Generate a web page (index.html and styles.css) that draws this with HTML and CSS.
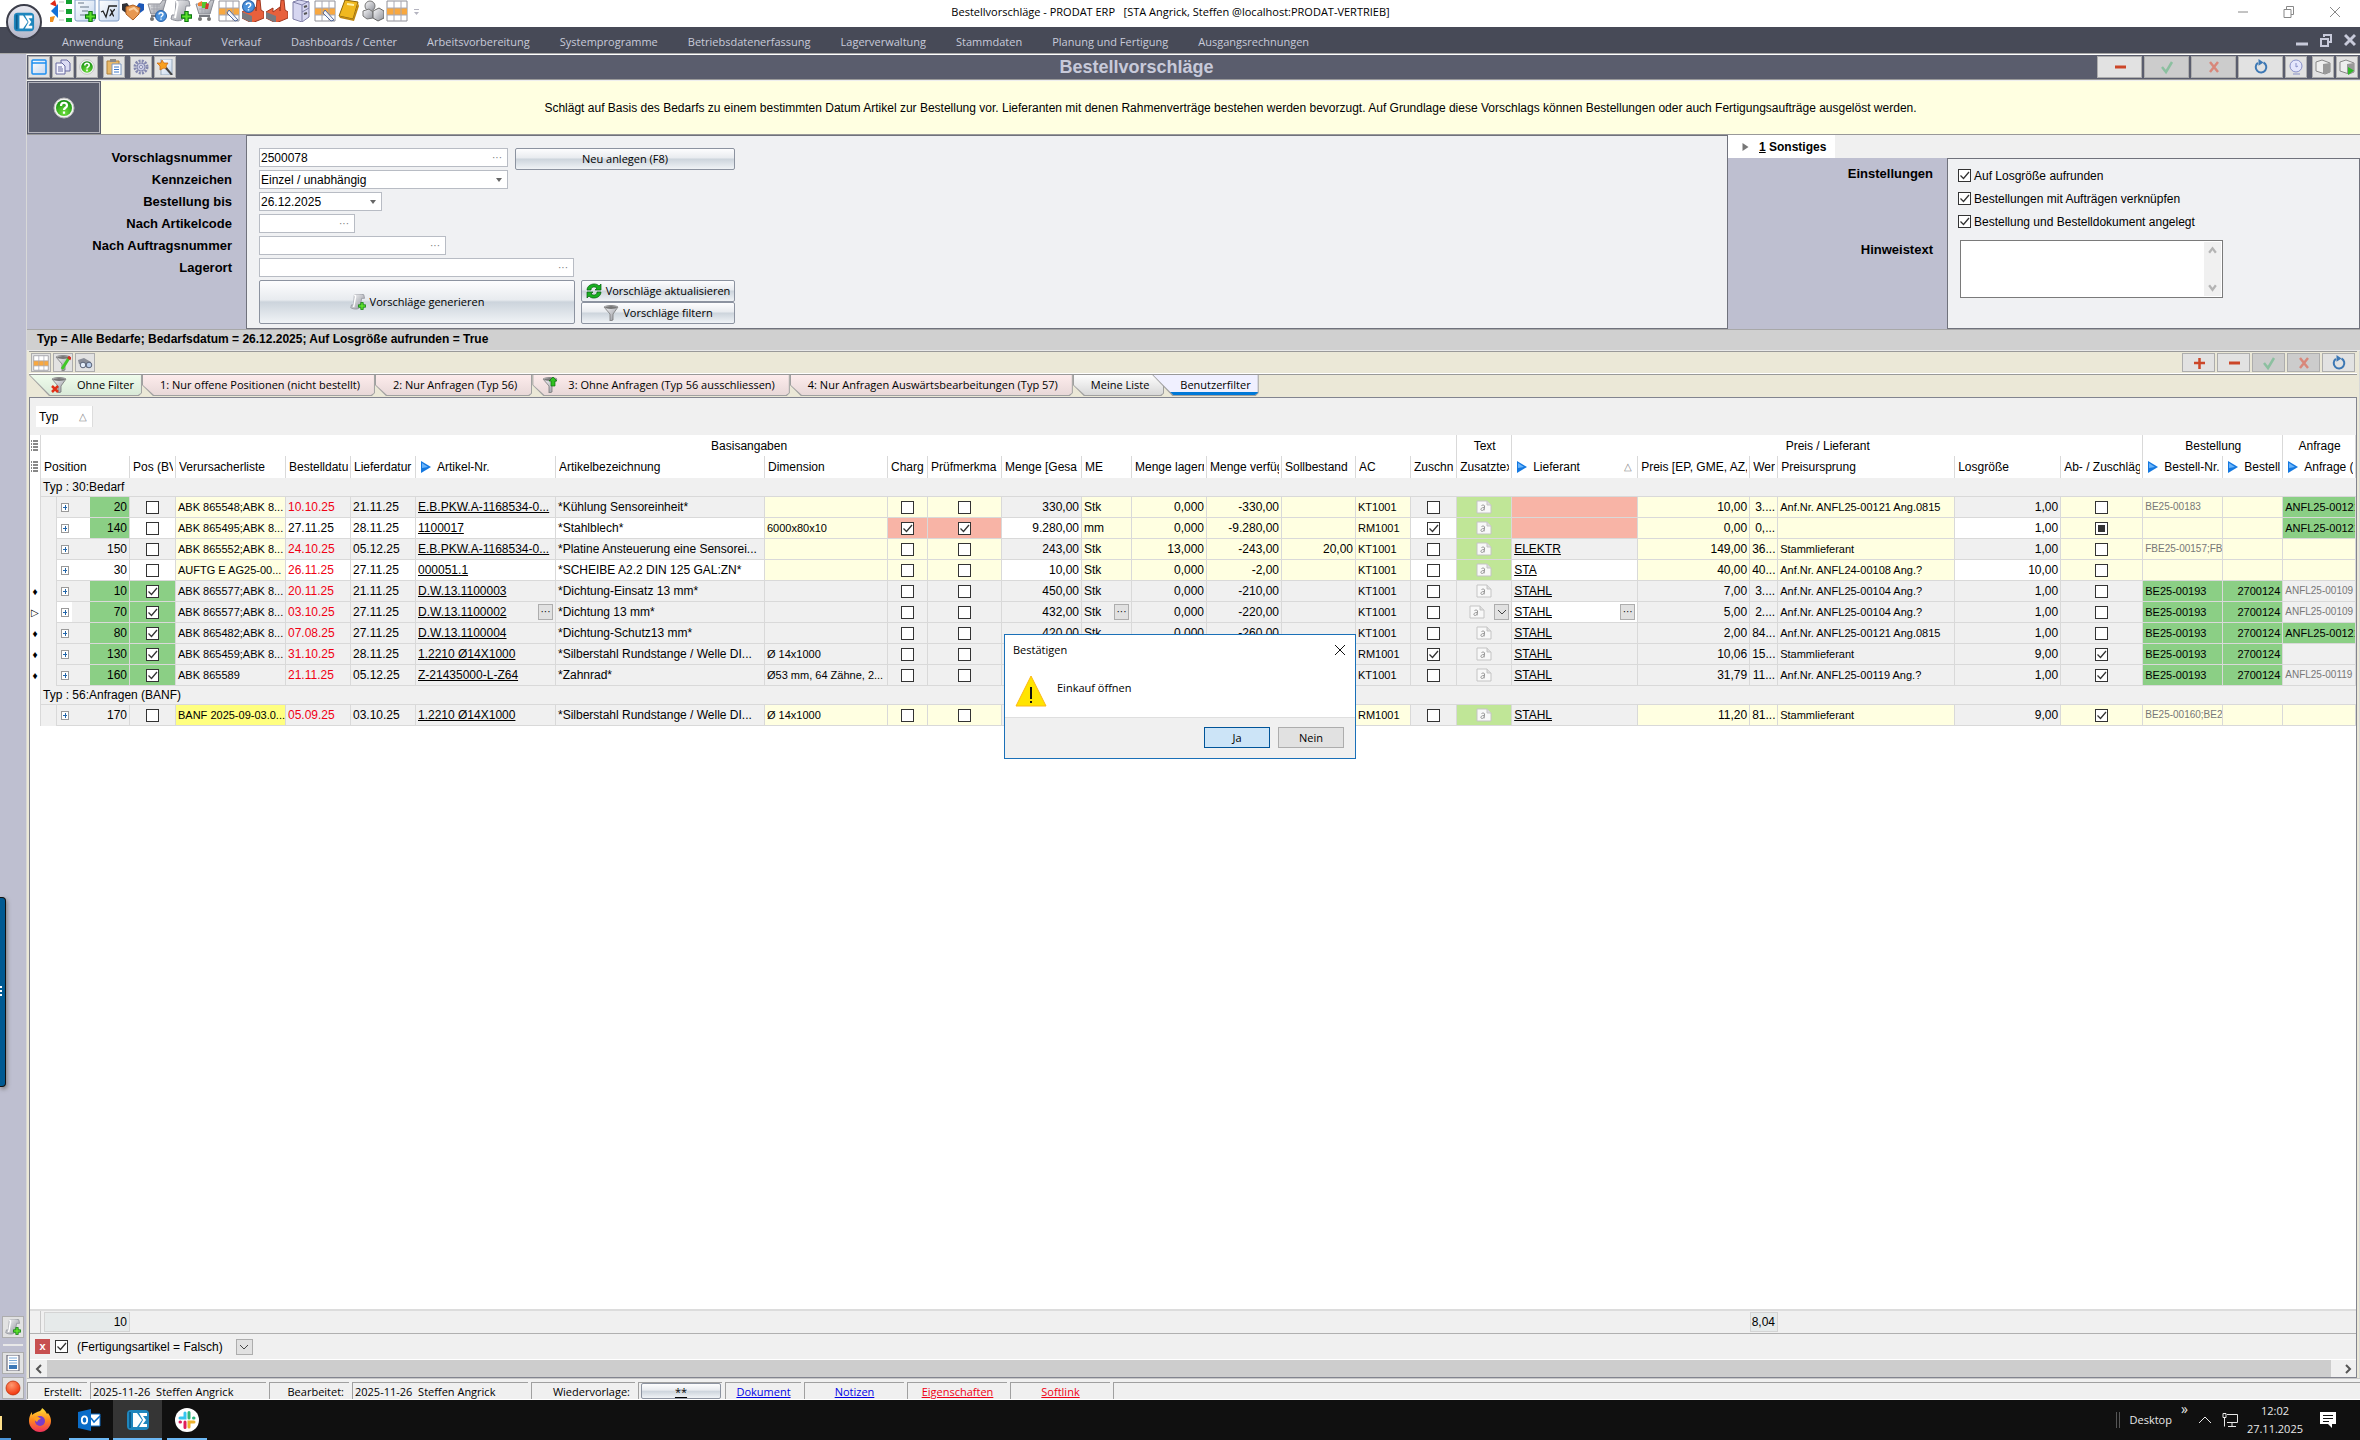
FILE: index.html
```html
<!DOCTYPE html>
<html lang="de">
<head>
  <meta charset="UTF-8">
  <meta name="viewport" content="width=device-width, initial-scale=1.0">
  <title>Bestellvorschläge - PRODAT ERP</title>
  <link rel="stylesheet" href="styles.css">
</head>
<body>
  <!-- Icon definitions -->
  <svg class="defs" width="0" height="0" aria-hidden="true">
    <defs>
      <linearGradient id="gMetal" x1="0" y1="0" x2="1" y2="1"><stop offset="0" stop-color="#fafafc"/><stop offset="1" stop-color="#8d9098"/></linearGradient>
      <linearGradient id="gPaper" x1="0" y1="0" x2="1" y2="1"><stop offset="0" stop-color="#fff"/><stop offset="1" stop-color="#c4d6ee"/></linearGradient>
      <linearGradient id="gFox" x1="0" y1="0" x2="0" y2="1"><stop offset="0" stop-color="#ffe03a"/><stop offset=".5" stop-color="#ff8a1c"/><stop offset="1" stop-color="#f0305c"/></linearGradient>
      <radialGradient id="gGreen" cx=".5" cy=".8" r=".8"><stop offset="0" stop-color="#6fe03c"/><stop offset="1" stop-color="#128a10"/></radialGradient>
      <radialGradient id="gRed" cx=".4" cy=".3" r=".8"><stop offset="0" stop-color="#ff9a70"/><stop offset="1" stop-color="#f02800"/></radialGradient>
    </defs>
    <symbol id="plus" viewBox="0 0 10 10"><path d="M3.5 .5h3v3h3v3h-3v3h-3v-3h-3v-3h3z" fill="#5be02c" stroke="#0c7a10"/></symbol>
    <symbol id="ask" viewBox="0 0 12 12"><circle cx="6" cy="6" r="5.5" fill="#4b92dc" stroke="#2a62a8"/><path d="M4 4.6c0-2.4 4-2.4 4 0 0 1.400-2 1.400-2 2.800M6 8.600v1.200" fill="none" stroke="#fff" stroke-width="1.400"/></symbol>
    <symbol id="org" viewBox="0 0 22 22"><path d="M0 4l5-4 2 7z" fill="#e02818"/><path d="M1 11l7-7v14z" fill="#1470d8"/><path d="M0 17l5-1-2 6H0z" fill="#f09020"/><path d="M9 2h5M9 11h5M9 20h5" stroke="#bbb"/><path d="M16 0h6v4h-6zM16 9h6v5h-6zM16 18h6v4h-6z" fill="#12a030"/></symbol>
    <symbol id="doc" viewBox="0 0 22 22"><path d="M1 0v19q0 2 2 2h16q2 0 2-2V0z" fill="url(#gPaper)" stroke="#7f9cc6"/><path d="M4 3h6M6 7h9M8 11h6M6 15h5" stroke="#678"/><use href="#plus" x="11" y="11" width="11" height="11"/></symbol>
    <symbol id="root" viewBox="0 0 22 22"><path d="M1 0v19q0 2 2 2h16q2 0 2-2V0z" fill="url(#gPaper)" stroke="#7f9cc6"/><path d="M3 12l2-1 3 6 3-11h8M12 10c2-1 2 6 4 6M17 9.500c-2 0-4 6-5.500 6.500" fill="none" stroke="#222" stroke-width="1.300"/></symbol>
    <symbol id="hands" viewBox="0 0 22 22"><path d="M0 4l5-1 3 4-4 6-4-3z" fill="#303238"/><path d="M22 4l-5-1-3 4 4 6 4-3z" fill="#1c58b8"/><path d="M4 7l7-2 7 3-1 6-6 6-7-6z" fill="#e89850" stroke="#b06020"/><path d="M7 10l5-2 4 4" fill="none" stroke="#fbd0a0" stroke-width="2"/></symbol>
    <symbol id="cart" viewBox="0 0 22 22"><path d="M2 4h12l3-4h3l-4 14H5z" fill="url(#gMetal)" stroke="#888a92"/><path d="M5 6h9M5 9h9M8 4v9M11 4v9" stroke="#a6a8b0"/><path d="M5 16h11" stroke="#77797f" stroke-width="2"/><circle cx="6" cy="19" r="2" fill="#777"/><circle cx="15" cy="19" r="2" fill="#777"/></symbol>
    <symbol id="cartask" viewBox="0 0 22 22"><use href="#cart"/><use href="#ask" x="9" y="10" width="12" height="12"/></symbol>
    <symbol id="cartfull" viewBox="0 0 22 22"><use href="#cart"/><path d="M4 3l4-2 1 5H4z" fill="#f08030"/><path d="M8 2h5v6H8z" fill="#52c832"/><path d="M12 3l3 1-1 5h-3z" fill="#d8362c"/></symbol>
    <symbol id="scroll" viewBox="0 0 22 22"><path d="M6 1c3-2 10-1 13 0l1 5h-4l-2 12c-3 4-9 3-13 1l1-4h3z" fill="url(#gMetal)" stroke="#8c8f98"/><path d="M6 1c2 1 2 3 1 6L5 18" fill="none" stroke="#fff" stroke-width="2"/><use href="#plus" x="11" y="11" width="11" height="11"/></symbol>
    <symbol id="grid" viewBox="0 0 22 22"><path d="M1 1h20v20H1z" fill="#fff" stroke="#909098"/><path d="M1 8h20v7H1z" fill="#f8a840"/><path d="M1 8h20M1 15h20M8 1v20M15 1v20" stroke="#a8a8b4"/></symbol>
    <symbol id="gridpen" viewBox="0 0 22 22"><use href="#grid"/><path d="M11 10l9 10-3 1-8-8z" fill="#f2f4fa" stroke="#556a9a"/></symbol>
    <symbol id="factory" viewBox="0 0 22 22"><path d="M0 12l7-4v4l7-5v4l1-11h3l1 10 3 2v6l-12 5-10-5z" fill="#e8603c" stroke="#a03820"/><path d="M0 12l10 4v7L0 18z" fill="#777a80"/></symbol>
    <symbol id="factoryask" viewBox="0 0 22 22"><use href="#factory"/><use href="#ask" x="0" y="0" width="13" height="13"/></symbol>
    <symbol id="cabinet" viewBox="0 0 22 22"><path d="M3 2l6-2 10 2v15l-7 5-9-3z" fill="#d6d6f0" stroke="#8080a8"/><path d="M3 2l9 3v17M12 5l7-4M12 12l7-4" fill="none" stroke="#8080a8"/><path d="M14 7l3-1M14 14l3-1" stroke="#555" stroke-width="2"/></symbol>
    <symbol id="book" viewBox="0 0 22 22"><path d="M7 0l13 2-5 17-14-3z" fill="#f0b820" stroke="#8c6408"/><path d="M9 4l7 1" stroke="#fff2a8" stroke-width="2"/><path d="M1 16l14 3 5-16 1 3-5 15-14-3z" fill="#c08810"/></symbol>
    <symbol id="bricks" viewBox="0 0 22 22"><circle cx="8" cy="6" r="5" fill="url(#gMetal)" stroke="#777"/><path d="M1 11l6-2 4 3v6l-6 1-4-3z" fill="url(#gMetal)" stroke="#777"/><path d="M11 11l6-3 5 3v7l-6 3-5-3z" fill="url(#gMetal)" stroke="#666"/></symbol>
    <symbol id="logo" viewBox="0 0 24 24"><rect x="1" y="2" width="22" height="20" rx="4" fill="#1f86bd"/><path d="M5 4H3v16h2z" fill="#0c5c8c"/><path d="M7 5h4l5 7-5 7H7z" fill="#fff"/><path d="M13 5h8v3h-4l3 4-3 4h4v3h-8l4-7z" fill="#fff"/></symbol>
    <symbol id="help" viewBox="0 0 22 22"><circle cx="11" cy="11" r="10" fill="#f4f4f4" stroke="#b8b8b8"/><circle cx="11" cy="11" r="8" fill="url(#gGreen)"/><path d="M8 9c0-4.500 6-4 6-.5 0 2.500-3 2-3 4.500M11 14.500v2.300" fill="none" stroke="#fff" stroke-width="2.200"/></symbol>
    <symbol id="window" viewBox="0 0 16 16"><rect x="1" y="1" width="14" height="14" rx="1" fill="url(#gPaper)" stroke="#1c8ff0" stroke-width="1.500"/><path d="M1 4h14" stroke="#1c8ff0" stroke-width="1.500"/></symbol>
    <symbol id="copy" viewBox="0 0 16 16"><path d="M6 1h6l3 3v8H6z" fill="#dcdcf4" stroke="#6668a0"/><path d="M1 4h6l3 3v8H1z" fill="#f4f4fe" stroke="#6668a0"/><path d="M3 8h4M3 10h5M3 12h5" stroke="#6668a0"/></symbol>
    <symbol id="paste" viewBox="0 0 16 16"><path d="M1 2h12v13H1z" fill="#e8b868" stroke="#b08038"/><path d="M4 0h6v3H4z" fill="#888"/><path d="M6 5h9v11H6z" fill="#fff" stroke="#7a96c0"/><path d="M8 8h5M8 10.500h5M8 13h5" stroke="#3c78c8"/></symbol>
    <symbol id="gear" viewBox="0 0 16 16"><circle cx="8" cy="8" r="6" fill="none" stroke="#8488b0" stroke-width="3" stroke-dasharray="2 1.140"/><circle cx="8" cy="8" r="4" fill="#c8cae4" stroke="#8488b0"/><circle cx="8" cy="8" r="1.500" fill="#fff" stroke="#8488b0"/></symbol>
    <symbol id="wand" viewBox="0 0 16 16"><path d="M4 0h11v16H4z" fill="url(#gPaper)" stroke="#9ab"/><path d="M5 1l2 3 4 0-2 3 2 4-4-2-4 2 0-4-3-3h4z" fill="#f8a020" stroke="#c86008" stroke-width=".7"/><path d="M9 9l6 7" stroke="#444" stroke-width="2"/></symbol>
    <symbol id="funnel" viewBox="0 0 16 16"><path d="M1 2c3-2 11-2 14 0l-5 7v6l-3 1V9z" fill="url(#gMetal)" stroke="#777" stroke-width=".8"/><ellipse cx="8" cy="2.500" rx="6" ry="1.500" fill="#777"/></symbol>
    <symbol id="funnelx" viewBox="0 0 16 16"><use href="#funnel"/><path d="M1 9l6 6M7 9l-6 6" stroke="#e03018" stroke-width="2.500"/></symbol>
    <symbol id="funnelup" viewBox="0 0 16 16"><use href="#funnel"/><path d="M11 0l4 4h-2v5H9V4H7z" fill="#30c020" stroke="#107010" stroke-width=".7"/></symbol>
    <symbol id="funnelpen" viewBox="0 0 16 16"><use href="#funnel"/><path d="M14 3L7 14" stroke="#40c828" stroke-width="3"/><path d="M13 2l3 2" stroke="#d03020" stroke-width="3"/></symbol>
    <symbol id="binoc" viewBox="0 0 16 16"><path d="M1 5l6-2 7 4v5l-4 1-4-3-4-1z" fill="#8a8e98"/><circle cx="6" cy="10" r="2.800" fill="#e4eefa" stroke="#5a6478"/><circle cx="12" cy="10" r="2.800" fill="#b8cce8" stroke="#5a6478"/></symbol>
    <symbol id="refresh" viewBox="0 0 16 16"><path d="M10.500 3.500a5.300 5.300 0 1 1-5.600.4" fill="none" stroke="#3d78b4" stroke-width="2"/><path d="M5.500 0l5 3.500-5 3.200z" fill="#3d78b4"/></symbol>
    <symbol id="cycle" viewBox="0 0 16 16"><path d="M1 7c0-6 9-8 12-4l2-2v6H9l2-2C8 3 5 4 5 7z" fill="#18b020" stroke="#075c10" stroke-width=".7"/><path d="M15 9c0 6-9 8-12 4l-2 2V9h6l-2 2c3 2 6 1 6-2z" fill="#18b020" stroke="#075c10" stroke-width=".7"/></symbol>
    <symbol id="check" viewBox="0 0 16 16"><path d="M3 8l4 5 6-10" fill="none" stroke="#8cc0a0" stroke-width="2.500"/></symbol>
    <symbol id="cross" viewBox="0 0 16 16"><path d="M4 3l8 10M12 3L4 13" fill="none" stroke="#d8877a" stroke-width="2.500"/></symbol>
    <symbol id="minus" viewBox="0 0 16 16"><path d="M3 8h11" stroke="#cc4628" stroke-width="3"/></symbol>
    <symbol id="add" viewBox="0 0 16 16"><path d="M3 8h11M8.500 3v11" stroke="#cc4628" stroke-width="2.500"/></symbol>
    <symbol id="clock" viewBox="0 0 16 16"><circle cx="8" cy="7" r="6" fill="#e4e6fc" stroke="#8890c8"/><path d="M8 4v4l2-1M5 15h7" fill="none" stroke="#8890c8"/></symbol>
    <symbol id="box" viewBox="0 0 16 16"><path d="M1 3l6-2 8 3v9l-5 2-9-3z" fill="#eee" stroke="#888"/><path d="M8 5l7-1v9l-5 2-2-1z" fill="#999"/></symbol>
    <symbol id="boxgo" viewBox="0 0 16 16"><use href="#box"/><path d="M9 8l6 3.500L9 16z" fill="#30b828"/></symbol>
    <symbol id="link" viewBox="0 0 10 12"><path d="M0 0l10 6-10 6z" fill="#1478e0"/><path d="M1 2l6 4-6 1z" fill="#6ab4fa"/></symbol>
    <symbol id="note" viewBox="0 0 16 14"><path d="M1 1h10l4 4v8H1z" fill="#f8f8f8" stroke="#c4c4c4"/><path d="M11 1v4h4" fill="#ddd" stroke="#c4c4c4"/><path d="M5.500 5.500c2-1 3.500-.5 3 1.500L8 10.500M8.500 7.500c-4-.5-4.500 3-2.500 3 1 0 2-1 2.200-2" fill="none" stroke="#999"/></symbol>
    <symbol id="page" viewBox="0 0 16 16"><path d="M2 0h12v16H2z" fill="#fff" stroke="#556"/><path d="M4 3h8M4 5.500h8M4 8h8" stroke="#78a8d8"/><path d="M4 10h8v4H4z" fill="#3c78b8"/></symbol>
    <symbol id="dot" viewBox="0 0 16 16"><circle cx="8" cy="8" r="7" fill="url(#gRed)" stroke="#b82800" stroke-width=".7"/></symbol>
    <symbol id="lines" viewBox="0 0 7 12"><path d="M2 1h5M2 4h5M2 7h5M2 10h5M0 1h1M0 4h1M0 7h1M0 10h1" stroke="#111"/></symbol>
    <symbol id="firefox" viewBox="0 0 24 24"><path d="M12 3c1-1 2-2 2-3 3 2 4 4 5 6l1-1c2 3 3 5 3 8 0 6-5 11-11 11S1 19 1 13c0-4 1-6 3-9v3c2-2 5-3 8-4z" fill="url(#gFox)"/><circle cx="12" cy="13" r="5" fill="#7a3cc8"/><path d="M6 9c3-1 5 0 7 2-2 0-3 1-4 3-2-1-3-3-3-5z" fill="#ffa020"/></symbol>
    <symbol id="outlook" viewBox="0 0 24 24"><path d="M13 6h10v12H13z" fill="#fff" stroke="#0a6cc8"/><path d="M14 10l3 4 6-6" fill="none" stroke="#0a6cc8" stroke-width="1.500"/><path d="M1 4l13-3v22L1 20z" fill="#0a6cc8"/><ellipse cx="7.500" cy="12" rx="2.700" ry="3.600" fill="none" stroke="#fff" stroke-width="1.800"/></symbol>
    <symbol id="slack" viewBox="0 0 24 24"><circle cx="12" cy="12" r="12" fill="#fff"/><g fill="none" stroke-width="3" stroke-linecap="round"><path d="M10 5v5H5" stroke="#36c5f0"/><path d="M14 4.500V10M19 10h-.5" stroke="#2eb67d"/><path d="M14 19v-5h5" stroke="#ecb22e"/><path d="M10 14v5.500M5 14h.5" stroke="#e01e5a"/></g></symbol>
  </svg>

  <!-- Window title bar -->
  <header class="titlebar">
    <div class="quick-icons">
      <svg><use href="#org"/></svg><svg><use href="#doc"/></svg><svg><use href="#root"/></svg><svg><use href="#hands"/></svg><svg><use href="#cartask"/></svg><svg><use href="#scroll"/></svg><svg><use href="#cartfull"/></svg><svg><use href="#gridpen"/></svg><svg><use href="#factoryask"/></svg><svg><use href="#factory"/></svg><svg><use href="#cabinet"/></svg><svg><use href="#gridpen"/></svg><svg><use href="#book"/></svg><svg><use href="#bricks"/></svg><svg><use href="#grid"/></svg>
      <svg viewBox="0 0 22 22"><path d="M4 9.500h5" stroke="#b4b4c0"/><path d="M4 12h5l-2.500 3z" fill="#b4b4c0"/></svg>
    </div>
    <h1 class="window-title">Bestellvorschläge - PRODAT ERP &nbsp; [STA Angrick, Steffen @localhost:PRODAT-VERTRIEB]</h1>
    <div class="window-buttons">
      <button aria-label="Minimieren"><svg viewBox="0 0 12 12"><path d="M1 6h10"/></svg></button>
      <button aria-label="Wiederherstellen"><svg viewBox="0 0 12 12"><path d="M1 3.500h7v8H1zM3.500 3.500v-3h7v8H8"/></svg></button>
      <button aria-label="Schließen"><svg viewBox="0 0 12 12"><path d="M1 1l10 10M11 1L1 11"/></svg></button>
    </div>
  </header>
  <button class="app-button" aria-label="Anwendungsmenü"><svg><use href="#logo"/></svg></button>

  <nav class="menubar">
    <a href="#">Anwendung</a>
    <a href="#">Einkauf</a>
    <a href="#">Verkauf</a>
    <a href="#">Dashboards / Center</a>
    <a href="#">Arbeitsvorbereitung</a>
    <a href="#">Systemprogramme</a>
    <a href="#">Betriebsdatenerfassung</a>
    <a href="#">Lagerverwaltung</a>
    <a href="#">Stammdaten</a>
    <a href="#">Planung und Fertigung</a>
    <a href="#">Ausgangsrechnungen</a>
    <div class="mdi-buttons">
      <svg viewBox="0 0 12 14"><path d="M0 11h12" stroke-width="3"/></svg>
      <svg viewBox="0 0 12 14"><path d="M1 6h7v7H1zM4 4V2h7v7H9" stroke-width="2"/></svg>
      <svg viewBox="0 0 12 14"><path d="M1 2l10 10M11 2L1 12" stroke-width="3"/></svg>
    </div>
  </nav>

  <div class="desktop">
    <aside class="rail">
      <button class="rail-tab" aria-label="Leiste einblenden"><svg viewBox="0 0 4 12"><path d="M0 1h2M0 5h2M0 9h2" stroke="#fff" stroke-width="2"/></svg></button>
      <button class="tool" aria-label="Neu"><svg><use href="#scroll"/></svg></button>
      <hr>
      <button class="tool" aria-label="Liste"><svg><use href="#page"/></svg></button>
      <button class="tool" aria-label="Aufnahme"><svg><use href="#dot"/></svg></button>
    </aside>

    <main class="workspace">
      <div class="form-toolbar">
        <button class="tool" aria-label="Fenster"><svg><use href="#window"/></svg></button>
        <button class="tool" aria-label="Kopieren"><svg><use href="#copy"/></svg></button>
        <button class="tool gap" aria-label="Hilfe"><svg><use href="#help"/></svg></button>
        <button class="tool gap" aria-label="Einfügen"><svg><use href="#paste"/></svg></button>
        <button class="tool" aria-label="Einstellungen"><svg><use href="#gear"/></svg></button>
        <button class="tool" aria-label="Assistent"><svg><use href="#wand"/></svg></button>
        <h2>Bestellvorschläge</h2>
        <button class="tool wide" aria-label="Löschen"><svg><use href="#minus"/></svg></button>
        <button class="tool wide off" aria-label="Speichern"><svg><use href="#check"/></svg></button>
        <button class="tool wide off" aria-label="Abbrechen"><svg><use href="#cross"/></svg></button>
        <button class="tool wide" aria-label="Aktualisieren"><svg><use href="#refresh"/></svg></button>
        <button class="tool gap" aria-label="Verlauf"><svg><use href="#clock"/></svg></button>
        <button class="tool" aria-label="Modul"><svg><use href="#box"/></svg></button>
        <button class="tool" aria-label="Modul starten"><svg><use href="#boxgo"/></svg></button>
      </div>

      <div class="info">
        <button class="help" aria-label="Hilfe"><svg><use href="#help"/></svg></button>
        <p>Schlägt auf Basis des Bedarfs zu einem bestimmten Datum Artikel zur Bestellung vor. Lieferanten mit denen Rahmenverträge bestehen werden bevorzugt. Auf Grundlage diese Vorschlags können Bestellungen oder auch Fertigungsaufträge ausgelöst werden.</p>
      </div>

      <!-- Head data -->
      <form class="head-form">
        <div class="labels">
          <label for="nummer">Vorschlagsnummer</label>
          <label for="kennzeichen">Kennzeichen</label>
          <label for="bis">Bestellung bis</label>
          <label for="artikelcode">Nach Artikelcode</label>
          <label for="auftrag">Nach Auftragsnummer</label>
          <label for="lagerort">Lagerort</label>
        </div>
        <div class="fields">
          <div class="field-row">
            <span class="box w-l"><input id="nummer" value="2500078"><i>···</i></span>
            <button type="button" class="silver new">Neu anlegen (F8)</button>
          </div>
          <div class="field-row"><span class="box w-l"><select id="kennzeichen"><option>Einzel / unabhängig</option></select><b></b></span></div>
          <div class="field-row"><span class="box w-m"><input id="bis" value="26.12.2025"><b></b></span></div>
          <div class="field-row"><span class="box w-s"><input id="artikelcode"><i>···</i></span></div>
          <div class="field-row"><span class="box w-n"><input id="auftrag"><i>···</i></span></div>
          <div class="field-row"><span class="box w-x"><input id="lagerort"><i>···</i></span></div>
          <div class="actions">
            <button type="button" class="silver generate"><svg><use href="#scroll"/></svg>Vorschläge generieren</button>
            <div class="action-stack">
              <button type="button" class="silver"><svg><use href="#cycle"/></svg>Vorschläge aktualisieren</button>
              <button type="button" class="silver"><svg><use href="#funnel"/></svg>Vorschläge filtern</button>
            </div>
          </div>
        </div>

        <div class="side">
          <div class="side-tabs"><button type="button"><svg viewBox="0 0 6 8"><path d="M0 0l6 4-6 4z" fill="#777"/></svg><span><u>1</u> Sonstiges</span></button></div>
          <div class="side-body">
            <div class="labels">
              <span class="tall">Einstellungen</span>
              <label for="hinweis">Hinweistext</label>
            </div>
            <div class="fields">
              <label class="check"><input type="checkbox" checked>Auf Losgröße aufrunden</label>
              <label class="check"><input type="checkbox" checked>Bestellungen mit Aufträgen verknüpfen</label>
              <label class="check"><input type="checkbox" checked>Bestellung und Bestelldokument angelegt</label>
              <div class="memo">
                <textarea id="hinweis"></textarea>
                <div class="memo-bar">
                  <svg viewBox="0 0 8 8"><path d="M1 6l3-4 3 4"/></svg>
                  <svg viewBox="0 0 8 8"><path d="M1 2l3 4 3-4"/></svg>
                </div>
              </div>
            </div>
          </div>
        </div>
      </form>

      <div class="criteria">Typ = Alle Bedarfe; Bedarfsdatum = 26.12.2025; Auf Losgröße aufrunden = True</div>

      <!-- Positions -->
      <section class="positions">
        <div class="grid-toolbar">
          <button class="tool" aria-label="Spalten"><svg><use href="#grid"/></svg></button>
          <button class="tool" aria-label="Filter bearbeiten"><svg><use href="#funnelpen"/></svg></button>
          <button class="tool" aria-label="Suchen"><svg><use href="#binoc"/></svg></button>
          <span class="spacer"></span>
          <button class="tool mid" aria-label="Hinzufügen"><svg><use href="#add"/></svg></button>
          <button class="tool mid" aria-label="Entfernen"><svg><use href="#minus"/></svg></button>
          <button class="tool mid off" aria-label="Speichern"><svg><use href="#check"/></svg></button>
          <button class="tool mid off" aria-label="Abbrechen"><svg><use href="#cross"/></svg></button>
          <button class="tool mid" aria-label="Aktualisieren"><svg><use href="#refresh"/></svg></button>
        </div>
        <div class="tabs">
          <button class="tab green slant"><svg><use href="#funnelx"/></svg>Ohne Filter</button>
          <button class="tab">1: Nur offene Positionen (nicht bestellt)</button>
          <button class="tab">2: Nur Anfragen (Typ 56)</button>
          <button class="tab icon"><svg><use href="#funnelup"/></svg>3: Ohne Anfragen (Typ 56 ausschliessen)</button>
          <button class="tab">4: Nur Anfragen Auswärtsbearbeitungen (Typ 57)</button>
          <button class="tab plain">Meine Liste</button>
          <button class="tab active slant">Benutzerfilter</button>
        </div>

        <div class="grid">
          <div class="group-by"><button>Typ <span>△</span></button></div>
          <div class="grid-scroll">
            <table id="positions">
              <thead>
                <tr class="bands">
                  <th class="ind"><svg class="lines"><use href="#lines"/></svg></th>
                  <th colspan="20">Basisangaben</th>
                  <th>Text</th>
                  <th colspan="6">Preis / Lieferant</th>
                  <th colspan="2">Bestellung</th>
                  <th>Anfrage</th>
                </tr>
              </thead>
              <tbody></tbody>
            </table>
          </div>
          <table class="totals" id="totals">
            <tbody><tr><td></td><td colspan="4"><div>10</div></td><td colspan="19"></td><td><div>8,04</div></td><td colspan="6"></td></tr></tbody>
          </table>
          <div class="filter-bar">
            <button class="remove" aria-label="Filter entfernen">x</button>
            <label class="check"><input type="checkbox" checked>(Fertigungsartikel = Falsch)</label>
            <button class="mini" aria-label="Filterverlauf"><svg viewBox="0 0 10 10"><path d="M1 3l4 4 4-4"/></svg></button>
          </div>
          <div class="scrollbar">
            <button aria-label="Nach links"><svg viewBox="0 0 10 10"><path d="M7 1L3 5l4 4"/></svg></button>
            <div class="thumb"></div>
            <button aria-label="Nach rechts"><svg viewBox="0 0 10 10"><path d="M3 1l4 4-4 4"/></svg></button>
          </div>
        </div>
      </section>

      <footer class="statusbar">
        <span class="s-lab">Erstellt:</span><span class="s-val">2025-11-26&nbsp; Steffen Angrick</span>
        <span class="s-lab mid">Bearbeitet:</span><span class="s-val">2025-11-26&nbsp; Steffen Angrick</span>
        <span class="s-lab long">Wiedervorlage:</span><span class="s-btn"><button class="silver"><u>**</u></button></span>
        <span class="s-link"><a href="#">Dokument</a></span>
        <span class="s-link big"><a href="#">Notizen</a></span>
        <span class="s-link big"><a href="#" class="set">Eigenschaften</a></span>
        <span class="s-link big"><a href="#" class="set">Softlink</a></span>
        <span class="s-rest"></span>
      </footer>
    </main>
  </div>

  <footer class="taskbar">
    <span class="task first"></span>
    <button class="task" aria-label="Firefox"><svg><use href="#firefox"/></svg></button>
    <button class="task open" aria-label="Outlook"><svg><use href="#outlook"/></svg></button>
    <button class="task open current" aria-label="PRODAT"><svg><use href="#logo"/></svg></button>
    <button class="task open" aria-label="Slack"><svg><use href="#slack"/></svg></button>
    <div class="tray">
      <span class="grip"></span>
      <span>Desktop</span>
      <span class="more">»</span>
      <svg viewBox="0 0 16 16"><path d="M2 11l6-6 6 6"/></svg>
      <svg viewBox="0 0 16 16"><path d="M5 2.500h10.500v8H5M10 10.500v4M6 14.500h8M1 1.500h3v4H1zM2.500 5.500v9"/></svg>
      <time>12:02<br>27.11.2025</time>
      <svg viewBox="0 0 16 16" class="msg"><path d="M0 0h16v12h-4v4l-4-4H0z" fill="#fff" stroke="none"/><path d="M3 3.500h10M3 6.500h10M3 9.500h6" stroke="#111"/></svg>
    </div>
  </footer>

  <!-- Confirmation dialog -->
  <div class="dialog" role="dialog" aria-labelledby="dialogTitle">
    <div class="dialog-head">
      <span id="dialogTitle">Bestätigen</span>
      <button aria-label="Schließen"><svg viewBox="0 0 12 12"><path d="M1 1l10 10M11 1L1 11"/></svg></button>
    </div>
    <div class="dialog-body">
      <svg viewBox="0 0 32 32"><path d="M16 1l15 30H1z" fill="#ffe400" stroke="#fcb816"/><path d="M16 12v12M16 26v2" stroke="#111" stroke-width="2"/></svg>
      <p>Einkauf öffnen</p>
    </div>
    <div class="dialog-foot">
      <button class="yes">Ja</button>
      <button>Nein</button>
    </div>
  </div>

  <script src="script.js"></script>
</body>
</html>
```

FILE: styles.css
```css
/* Base */
* {
  box-sizing: border-box;
}

body {
  margin: 0;
  height: 100vh;
  display: flex;
  flex-direction: column;
  overflow: hidden;
  font-family: "Liberation Sans", Arial, sans-serif;
  font-size: 12px;
  line-height: 16px;
  color: #000;
  background-color: #bebfd0;
}

button, input, select, textarea {
  font: inherit;
  color: inherit;
  margin: 0;
  padding: 0;
  border: none;
  border-radius: 0;
  background: none;
  outline: none;
}

h1, h2, p {
  margin: 0;
  font-weight: normal;
}

svg {
  display: block;
  flex: none;
  width: 16px;
  height: 16px;
}

.defs {
  position: absolute;
  width: 0;
  height: 0;
}

/* Title bar */
.titlebar {
  display: flex;
  align-items: flex-start;
  height: 27px;
  flex: none;
  padding-left: 50px;
  background-color: #fff;
  font-family: "Open Sans", sans-serif;
}

.quick-icons, .window-buttons {
  flex: 1;
  display: flex;
  gap: 2px;
}

.quick-icons svg {
  width: 22px;
  height: 22px;
}

.window-title {
  font-size: 11px;
  line-height: 24px;
  padding-right: 50px;
}

.window-buttons {
  justify-content: flex-end;
  gap: 34px;
  padding: 6px 19px 0 0;
}

.window-buttons svg {
  width: 12px;
  height: 12px;
  fill: none;
  stroke: #888;
}

.app-button {
  position: absolute;
  left: 6px;
  top: 4px;
  width: 36px;
  height: 36px;
  display: flex;
  align-items: center;
  justify-content: center;
  border: 2px solid #3c3e4a;
  border-radius: 50%;
  background: linear-gradient(#e8e8f0, #b4b6c8);
  z-index: 2;
}

.app-button svg {
  width: 24px;
  height: 22px;
}

/* Menu bar */
.menubar {
  display: flex;
  align-items: center;
  gap: 30px;
  height: 27px;
  flex: none;
  padding: 3px 4px 0 62px;
  background-color: #474a57;
  border-bottom: 1px solid #a8a8a8;
  font-family: "Open Sans", sans-serif;
  font-size: 11px;
}

.menubar a {
  color: #c8cada;
  text-decoration: none;
}

.mdi-buttons {
  display: flex;
  gap: 12px;
  margin-left: auto;
  padding-bottom: 4px;
}

.mdi-buttons svg {
  width: 12px;
  height: 14px;
  fill: none;
  stroke: #c8cada;
}

.desktop {
  flex: 1;
  display: flex;
  min-height: 0;
}

/* Left rail */
.rail {
  position: relative;
  width: 26px;
  flex: none;
  display: flex;
  flex-direction: column;
  justify-content: flex-end;
  align-items: center;
  gap: 3px;
  padding-bottom: 1px;
}

.rail hr {
  width: 20px;
  height: 2px;
  margin: 3px 0;
  border: none;
  background-color: #e8e8e8;
}

.rail-tab {
  position: absolute;
  left: 0;
  top: 843px;
  width: 6px;
  height: 190px;
  display: flex;
  align-items: center;
  background-color: #005a92;
  border: 1px solid #111;
  border-left: none;
  border-radius: 0 4px 4px 0;
  box-shadow: 1px 2px 4px #777;
}

.rail-tab svg {
  width: 4px;
  height: 12px;
}

.tool {
  width: 22px;
  height: 22px;
  flex: none;
  display: flex;
  align-items: center;
  justify-content: center;
  background-color: #e2e2e2;
  border: 1px solid #adadad;
}

.tool.wide {
  width: 45px;
}

.tool.mid {
  width: 33px;
}

.tool.off {
  background-color: #ccc;
}

/* Workspace */
.workspace {
  flex: 1;
  min-width: 0;
  display: flex;
  flex-direction: column;
  border-top: 1px solid #fff;
  border-left: 1px solid #d8d8d8;
}

.form-toolbar {
  display: flex;
  align-items: center;
  gap: 2px;
  height: 25px;
  flex: none;
  padding: 0 2px 0 1px;
  background-color: #5a5d6d;
  border-bottom: 1px solid #9a9a9a;
}

.form-toolbar .gap {
  margin-right: 3px;
}

.form-toolbar h2 {
  flex: 1;
  text-align: center;
  font-size: 18px;
  font-weight: bold;
  color: #c8cada;
}

.info {
  display: flex;
  height: 55px;
  flex: none;
  background-color: #ffffe1;
  border-bottom: 1px solid #999;
  border-top: 1px solid #eee;
}

.info .help {
  width: 74px;
  display: flex;
  align-items: center;
  justify-content: center;
  background-color: #5a5d6d;
  border: 2px solid #b4b4bc;
  outline: 1px solid #5a5d6d;
  outline-offset: -1px;
}

.help svg {
  width: 22px;
  height: 22px;
}

.info p {
  flex: 1;
  text-align: center;
  align-self: center;
}

/* Head form */
.head-form {
  display: flex;
  height: 194px;
  flex: none;
}

.labels {
  width: 219px;
  flex: none;
  display: flex;
  flex-direction: column;
  padding: 12px 14px 0 0;
  text-align: right;
  font-size: 13px;
  font-weight: bold;
  line-height: 22px;
  background-color: #bebfd0;
}

.fields {
  flex: 1;
  padding: 12px 12px 0;
  background-color: #f0f1f3;
  border: 1px solid #70727c;
}

.field-row {
  display: flex;
  gap: 7px;
  height: 22px;
}

.box {
  display: flex;
  align-items: center;
  height: 19px;
  padding: 0 5px 0 1px;
  background-color: #fff;
  border: 1px solid #b8bcc4;
}

.box input, .box select {
  flex: 1;
  min-width: 0;
  height: 17px;
  appearance: none;
}

.box i {
  font-size: 10px;
  font-style: normal;
  color: #777;
}

.box b {
  border: 3px solid transparent;
  border-top: 4px solid #666;
  border-bottom: none;
}

.w-s { width: 96px; }
.w-m { width: 123px; }
.w-n { width: 187px; }
.w-l { width: 249px; }
.w-x { width: 315px; }

.silver {
  display: flex;
  align-items: center;
  justify-content: center;
  gap: 4px;
  height: 22px;
  font-family: "Open Sans", sans-serif;
  font-size: 11px;
  border: 1px solid #8c93a0;
  border-radius: 2px;
  background: linear-gradient(#fdfdfe, #e8ebef 45%, #ccd4dc 50%, #f0f3f6);
}

.silver.new {
  width: 220px;
}

.actions {
  display: flex;
  gap: 6px;
}

.generate {
  width: 316px;
  height: 44px;
}

.action-stack .silver {
  width: 154px;
}

.side {
  width: 632px;
  flex: none;
  display: flex;
  flex-direction: column;
}

.side-tabs {
  height: 23px;
  background-color: #f0f0f0;
}

.side-tabs button {
  display: flex;
  align-items: center;
  gap: 10px;
  height: 23px;
  padding: 0 9px 0 14px;
  font-weight: bold;
  background-color: #fff;
}

.side-tabs svg {
  width: 7px;
  height: 8px;
}

.side-body {
  flex: 1;
  display: flex;
}

.side-body .labels {
  padding-top: 5px;
}

.side-body .tall {
  height: 76px;
}

.side-body .fields {
  padding: 5px 10px 0;
}

.check {
  display: flex;
  align-items: center;
  gap: 3px;
  height: 23px;
}

input[type="checkbox"] {
  appearance: none;
  display: block;
  width: 13px;
  height: 13px;
  flex: none;
  background-color: #fff;
  border: 1px solid #333;
}

input[type="checkbox"]:checked {
  background-image: url("data:image/svg+xml,%3Csvg xmlns='http://www.w3.org/2000/svg' viewBox='0 0 11 11'%3E%3Cpath d='M1.500 5.500l3 3L10 2' fill='none' stroke='%23333' stroke-width='1.300'/%3E%3C/svg%3E");
}

input[type="checkbox"]:indeterminate {
  background: #333 content-box;
  padding: 2px;
  box-shadow: inset 0 0 0 2px #fff;
}

.memo {
  display: flex;
  width: 263px;
  height: 58px;
  margin: 7px 2px;
  padding: 1px;
  background-color: #fff;
  border: 1px solid #7a7a7a;
}

.memo textarea {
  flex: 1;
  resize: none;
}

.memo-bar {
  width: 17px;
  display: flex;
  flex-direction: column;
  justify-content: space-between;
  align-items: center;
  padding: 4px 0;
  background-color: #f0f0f0;
}

.memo-bar svg {
  width: 9px;
  height: 9px;
  fill: none;
  stroke: #b4b4b4;
  stroke-width: 2;
}

.criteria {
  height: 22px;
  flex: none;
  padding: 1px 0 0 10px;
  font-weight: bold;
  background-color: #d0d0d0;
  border-top: 1px solid #a8a8a8;
  border-bottom: 1px solid #e8e8e8;
}

/* Positions */
.positions {
  flex: 1;
  min-height: 0;
  display: flex;
  flex-direction: column;
  padding: 0 2px 0 2px;
  background-color: #ebe8d7;
  border-right: 1px solid #d8d8d8;
}

.grid-toolbar {
  display: flex;
  align-items: center;
  gap: 2px;
  height: 23px;
  flex: none;
  padding: 0 2px;
  border-top: 1px solid #999;
  border-bottom: 1px solid #fff;
}

.grid-toolbar .tool {
  height: 19px;
}

.grid-toolbar .tool:not(.mid) {
  width: 20px;
}

.spacer {
  flex: 1;
}

.tabs {
  display: flex;
  height: 23px;
  flex: none;
  border-top: 1px solid #999;
  font-family: "Open Sans", sans-serif;
  font-size: 11px;
}

.tab {
  position: relative;
  isolation: isolate;
  display: flex;
  align-items: center;
  gap: 10px;
  height: 21px;
  padding: 0 15px 2px 18px;
  background-color: #a0a0a0;
  clip-path: polygon(0 0, 100% 0, 100% 18px, calc(100% - 3px) 100%, 11px 100%, 0 10px);
}

.tab::before {
  content: "";
  position: absolute;
  inset: 0 1px 1px;
  z-index: -1;
  background: linear-gradient(#fdecec, #e8d8d8);
  clip-path: polygon(0 0, 100% 0, 100% 18px, calc(100% - 3px) 100%, 11px 100%, 0 10px);
}

.tab.slant, .tab.slant::before {
  clip-path: polygon(0 0, 100% 0, 100% 18px, calc(100% - 3px) 100%, 20px 100%);
}

.tab.slant {
  padding-left: 22px;
}

.tab.icon {
  padding-left: 10px;
}

.tab.green {
  padding-right: 8px;
}

.tab.green::before {
  background: linear-gradient(#effcec, #d9e9d8);
}

.tab.plain::before {
  background: linear-gradient(#fdfdfd, #d8d8d8);
}

.tab.active {
  margin-left: -12px;
  padding: 0 8px 2px 28px;
}

.tab.active::before {
  background: linear-gradient(#f0f0ff 17px, #0078d7 17px);
}

.grid {
  flex: 1;
  min-height: 0;
  display: flex;
  flex-direction: column;
  background-color: #f0f0f0;
  border: 1px solid #82848f;
}

.group-by {
  height: 37px;
  flex: none;
  padding: 8px 6px;
}

.group-by button {
  display: flex;
  justify-content: space-between;
  align-items: center;
  width: 57px;
  height: 21px;
  padding: 0 5px 0 3px;
  background-color: #fff;
  border-right: 1px solid #ddd;
}

.group-by span, .sort {
  color: #888;
  font-size: 10px;
}

.grid-scroll {
  flex: 1;
  min-height: 0;
  overflow: hidden;
  background-color: #fff;
}

table {
  width: 100%;
  table-layout: fixed;
  border-collapse: separate;
  border-spacing: 0;
}

th, td {
  height: 21px;
  padding: 0 2px;
  overflow: hidden;
  white-space: nowrap;
  line-height: 16px;
  border-right: 1px solid #d9d9d9;
}

th {
  padding-left: 3px;
  font-weight: normal;
  text-align: left;
  background-color: #fff;
}

.bands th {
  text-align: center;
}

.heads th {
  height: 22px;
}

.heads div {
  display: flex;
  align-items: center;
  gap: 6px;
  overflow: hidden;
}

.heads .sort {
  margin-left: auto;
  padding-right: 3px;
}

.heads .link {
  width: 10px;
  height: 12px;
  margin-left: 2px;
}

svg.lines {
  width: 7px;
  height: 12px;
}

.ind {
  padding: 0 1px;
  background-color: #fff;
  text-align: center;
}

.group td {
  height: 19px;
  background-color: #f0f0f0;
  border-right: none;
  border-bottom: 1px solid #d9d9d9;
}

.group td.ind, .row td.ind, .row td.indent {
  border-bottom: none;
}

.group td.ind {
  background-color: #fff;
  border-right: 1px solid #d9d9d9;
}

.row td {
  background-color: #fff;
  border-bottom: 1px solid #d9d9d9;
}

.row.grey td, .row td.indent {
  background-color: #f0f0f0;
}

.row td.ind, .row.current td.exp, .row.current td.lief {
  background-color: #fff;
}

.row td.ind {
  padding: 0;
  font-size: 10px;
}

.row td.exp, .row td.gap {
  border-right: none;
}

.row td.exp {
  padding: 0 4px;
}

.row .exp button {
  display: block;
  width: 8px;
  height: 9px;
  border: 1px solid #999;
  background: linear-gradient(#26a, #26a) center / 4px 1px no-repeat, linear-gradient(#26a, #26a) center / 1px 5px no-repeat, #fff;
}

.row .num {
  text-align: right;
}

.row .small {
  font-size: 11px;
}

.row .faint {
  font-size: 10px;
  color: #777;
}

.row .late {
  color: #f00014;
}

.row .box-cell input {
  margin: 0 auto;
}

.row td.yellow { background-color: #ffffe1; }
.row td.bright { background-color: #ffff80; }
.row td.lime { background-color: #c0e697; }
.row td.ok { background-color: #8bcf85; }
.row td.miss { background-color: #f8b4a6; }

.row a {
  color: #000;
}

.cell {
  display: flex;
  align-items: center;
  justify-content: space-between;
}

.note {
  width: 16px;
  height: 14px;
  margin: 0 auto;
}

.mini {
  width: 15px;
  height: 16px;
  display: flex;
  align-items: center;
  justify-content: center;
  font-size: 10px;
  line-height: 10px;
  background-color: #e1e1e1;
  border: 1px solid #adadad;
}

.mini svg {
  width: 10px;
  height: 10px;
  fill: none;
  stroke: #444;
}

/* Column widths */
.c11 { width: 11px; }
.c15 { width: 15px; }
.c16 { width: 16px; }
.c18 { width: 18px; }
.c28 { width: 28px; }
.c40 { width: 40px; }
.c46 { width: 46px; }
.c50 { width: 50px; }
.c55 { width: 55px; }
.c60 { width: 60px; }
.c65 { width: 65px; }
.c74 { width: 74px; }
.c75 { width: 75px; }
.c80 { width: 80px; }
.c82 { width: 82px; }
.c106 { width: 106px; }
.c110 { width: 110px; }
.c112 { width: 112px; }
.c123 { width: 123px; }
.c126 { width: 126px; }
.c140 { width: 140px; }
.c177 { width: 177px; }
.c209 { width: 209px; }

.totals {
  flex: none;
  height: 25px;
  border-top: 2px solid #dcdcdc;
  border-bottom: 1px solid #b0b0b0;
}

.totals td {
  padding: 0;
  border-right: none;
}

.totals td:first-child {
  border-right: 1px solid #c8c8c8;
}

.totals div {
  display: flex;
  justify-content: flex-end;
  height: 20px;
  padding: 1px 2px;
  background-color: #e6eaea;
  border: 1px solid #d4d4d4;
  overflow: hidden;
}

.totals td:nth-child(2) {
  padding-left: 3px;
}

.filter-bar {
  display: flex;
  align-items: center;
  gap: 5px;
  height: 25px;
  flex: none;
  padding-left: 5px;
}

.filter-bar .check {
  gap: 9px;
}

.filter-bar .mini {
  width: 17px;
  margin-left: 8px;
}

.remove {
  width: 15px;
  height: 15px;
  font-size: 11px;
  line-height: 11px;
  font-weight: bold;
  color: #fff;
  background-color: #c75050;
}

.scrollbar {
  display: flex;
  height: 18px;
  flex: none;
  border-top: 1px solid #fff;
}

.scrollbar button {
  width: 17px;
  display: flex;
  align-items: center;
  justify-content: center;
}

.scrollbar svg {
  width: 10px;
  height: 10px;
  fill: none;
  stroke: #555;
  stroke-width: 2;
}

.thumb {
  flex: 1;
  margin-right: 8px;
  background-color: #cdcdcd;
}

/* Status bar */
.statusbar {
  display: flex;
  gap: 3px;
  height: 22px;
  flex: none;
  padding-top: 3px;
  background-color: #f0f0f0;
  border-top: 1px solid #c8c8c8;
  border-bottom: 1px solid #fff;
  font-family: "Open Sans", sans-serif;
  font-size: 11px;
  line-height: 17px;
}

.statusbar > span {
  border-top: 1px solid #a0a0a0;
  border-left: 1px solid #a0a0a0;
  padding: 0 2px;
}

.statusbar .s-lab {
  width: 60px;
  padding-right: 5px;
  text-align: right;
}

.statusbar .mid {
  width: 80px;
}

.statusbar .long {
  width: 104px;
}

.s-val {
  width: 176px;
}

.s-btn {
  width: 84px;
}

.s-btn .silver {
  width: 80px;
  height: 16px;
}

.s-link {
  width: 76px;
  text-align: center;
}

.statusbar .big {
  width: 100px;
}

.s-link a {
  color: #0000e6;
}

.s-link a.set {
  color: #f00014;
}

.s-rest {
  flex: 1;
}

/* Taskbar */
.taskbar {
  display: flex;
  height: 40px;
  flex: none;
  background-color: #101010;
  color: #e8e8e8;
  font-family: "Open Sans", sans-serif;
  font-size: 11px;
  line-height: 18px;
}

.task {
  width: 49px;
  display: flex;
  align-items: center;
  justify-content: center;
}

.task svg {
  width: 24px;
  height: 24px;
}

.task.first {
  width: 15px;
  background: linear-gradient(#ffe08a, #ffe08a) 0 16px / 2px 14px no-repeat, linear-gradient(#4a94d8, #4a94d8) 0 100% / 11px 2px no-repeat;
}

.task.open {
  background: linear-gradient(#6cb8f4, #6cb8f4) center bottom / 40px 2px no-repeat;
}

.task.current {
  background-color: #353535;
  background-size: 49px 2px;
}

.tray {
  display: flex;
  align-items: center;
  margin-left: auto;
  gap: 9px;
  padding-right: 24px;
}

.tray svg {
  fill: none;
  stroke: #e8e8e8;
}

.tray .more {
  align-self: flex-start;
  font-size: 14px;
}

.tray time {
  text-align: center;
}

.tray .msg {
  margin-left: 8px;
}

.grip {
  width: 4px;
  height: 16px;
  border-left: 1px solid #555;
  border-right: 1px solid #555;
}

/* Dialog */
.dialog {
  position: absolute;
  left: calc(50% - 176px);
  top: 634px;
  width: 352px;
  height: 125px;
  display: flex;
  flex-direction: column;
  background-color: #fff;
  border: 1px solid #1a70b8;
  font-family: "Open Sans", sans-serif;
  font-size: 11px;
  z-index: 3;
}

.dialog-head {
  display: flex;
  justify-content: space-between;
  align-items: center;
  height: 30px;
  padding: 0 9px 0 8px;
}

.dialog-head svg {
  width: 12px;
  height: 12px;
  fill: none;
  stroke: #111;
}

.dialog-body {
  flex: 1;
  display: flex;
  gap: 10px;
  padding: 10px;
}

.dialog-body svg {
  width: 32px;
  height: 32px;
}

.dialog-body p {
  padding-top: 5px;
}

.dialog-foot {
  display: flex;
  justify-content: flex-end;
  gap: 8px;
  height: 41px;
  padding: 9px 11px;
  background-color: #f0f0f0;
  border-top: 1px solid #dfdfdf;
}

.dialog-foot button {
  width: 66px;
  height: 21px;
  background-color: #e1e1e1;
  border: 1px solid #adadad;
}

.dialog-foot .yes {
  background-color: #cce4f7;
  border: 1px solid #005499;
}
```

FILE: script.js
```javascript
// Column widths, left to right (the last column takes the rest)
const widths = [11, 16, 15, 18, 40, 46, 110, 65, 65, 140, 209, 123, 40, 74, 80, 50, 75, 75, 74, 55, 46, 55, 126, 112, 28, 177, 106, 82, 80, 60];

// [title, colspan, linked, sorted]
const heads = [
  ['Position', 4], ['Pos (BV'], ['Verursacherliste'], ['Bestelldatu'], ['Lieferdatur'], ['Artikel-Nr.', 1, true],
  ['Artikelbezeichnung'], ['Dimension'], ['Charg'], ['Prüfmerkma'], ['Menge [Gesa'], ['ME'], ['Menge lagern'],
  ['Menge verfüg'], ['Sollbestand'], ['AC'], ['Zuschn'], ['Zusatztex'], ['Lieferant', 1, true, true],
  ['Preis [EP, GME, AZ,'], ['Wer'], ['Preisursprung'], ['Losgröße'], ['Ab- / Zuschläg'], ['Bestell-Nr.', 1, true],
  ['Bestell', 1, true], ['Anfrage (B', 1, true]
];

// pos, verursacher, bestelldatum, lieferdatum, artikel, bezeichnung, dimension, charge, prüf, menge, me, lager,
// verfügbar, soll, ac, zuschnitt, lieferant, preis, wert, ursprung, losgröße, ab/zuschlag, bestell-nr, bestellpos, anfrage
const groups = [
  { title: 'Typ : 30:Bedarf', rows: [
    ['20', 'ABK 865548;ABK 8...', '10.10.25', '21.11.25', 'E.B.PKW.A-1168534-0...', '*Kühlung Sensoreinheit*', '', 0, 0, '330,00', 'Stk', '0,000', '-330,00', '', 'KT1001', 0, '', '10,00', '3....', 'Anf.Nr. ANFL25-00121 Ang.0815', '1,00', 0, 'BE25-00183', '', 'ANFL25-00121'],
    ['140', 'ABK 865495;ABK 8...', '27.11.25', '28.11.25', '1100017', '*Stahlblech*', '6000x80x10', 1, 1, '9.280,00', 'mm', '0,000', '-9.280,00', '', 'RM1001', 1, '', '0,00', '0,...', '', '1,00', 2, '', '', 'ANFL25-00121'],
    ['150', 'ABK 865552;ABK 8...', '24.10.25', '05.12.25', 'E.B.PKW.A-1168534-0...', '*Platine Ansteuerung eine Sensorei...', '', 0, 0, '243,00', 'Stk', '13,000', '-243,00', '20,00', 'KT1001', 0, 'ELEKTR', '149,00', '36...', 'Stammlieferant', '1,00', 0, 'FBE25-00157;FBE', '', ''],
    ['30', 'AUFTG E AG25-00...', '26.11.25', '27.11.25', '000051.1', '*SCHEIBE A2.2 DIN 125 GAL:ZN*', '', 0, 0, '10,00', 'Stk', '0,000', '-2,00', '', 'KT1001', 0, 'STA', '40,00', '40...', 'Anf.Nr. ANFL24-00108 Ang.?', '10,00', 0, '', '', ''],
    ['10', 'ABK 865577;ABK 8...', '20.11.25', '21.11.25', 'D.W.13.1100003', '*Dichtung-Einsatz 13 mm*', '', 0, 0, '450,00', 'Stk', '0,000', '-210,00', '', 'KT1001', 0, 'STAHL', '7,00', '3....', 'Anf.Nr. ANFL25-00104 Ang.?', '1,00', 0, 'BE25-00193', '2700124', 'ANFL25-00109'],
    ['70', 'ABK 865577;ABK 8...', '03.10.25', '27.11.25', 'D.W.13.1100002', '*Dichtung 13 mm*', '', 0, 0, '432,00', 'Stk', '0,000', '-220,00', '', 'KT1001', 0, 'STAHL', '5,00', '2....', 'Anf.Nr. ANFL25-00104 Ang.?', '1,00', 0, 'BE25-00193', '2700124', 'ANFL25-00109'],
    ['80', 'ABK 865482;ABK 8...', '07.08.25', '27.11.25', 'D.W.13.1100004', '*Dichtung-Schutz13 mm*', '', 0, 0, '420,00', 'Stk', '0,000', '-260,00', '', 'KT1001', 0, 'STAHL', '2,00', '84...', 'Anf.Nr. ANFL25-00121 Ang.0815', '1,00', 0, 'BE25-00193', '2700124', 'ANFL25-00121'],
    ['130', 'ABK 865459;ABK 8...', '31.10.25', '28.11.25', '1.2210 Ø14X1000', '*Silberstahl Rundstange / Welle DI...', 'Ø 14x1000', 0, 0, '', '', '', '', '', 'RM1001', 1, 'STAHL', '10,06', '15...', 'Stammlieferant', '9,00', 1, 'BE25-00193', '2700124', ''],
    ['160', 'ABK 865589', '21.11.25', '05.12.25', 'Z-21435000-L-Z64', '*Zahnrad*', 'Ø53 mm, 64 Zähne, 2...', 0, 0, '', '', '', '', '', 'KT1001', 0, 'STAHL', '31,79', '11...', 'Anf.Nr. ANFL25-00119 Ang.?', '1,00', 1, 'BE25-00193', '2700124', 'ANFL25-00119']
  ] },
  { title: 'Typ : 56:Anfragen (BANF)', rows: [
    ['170', 'BANF 2025-09-03.0...', '05.09.25', '03.10.25', '1.2210 Ø14X1000', '*Silberstahl Rundstange / Welle DI...', 'Ø 14x1000', 0, 0, '', '', '', '', '', 'RM1001', 0, 'STAHL', '11,20', '81...', 'Stammlieferant', '9,00', 1, 'BE25-00160;BE25', '', '']
  ] }
];

const td = (cls, html = '') => `<td class="${cls}">${html}</td>`;
const box = (state, name) => `<input type="checkbox" aria-label="${name}"${state === 1 ? ' checked' : ''}${state === 2 ? ' data-mixed' : ''}>`;
const link = text => text ? `<a href="#">${text}</a>` : '';
const more = '<button class="mini" aria-label="Auswahl">···</button>';
const note = '<svg class="note"><use href="#note"/></svg>';

function rowHtml(r) {
  const [pos, cause, order, due, art, name, dim, charge, check, qty, unit, stock, avail, target, ac, cut, supplier, price, value, origin, lot, extra, orderNo, orderPos, request] = r;
  const selected = orderPos !== '';
  const current = pos === '70';
  const y = selected ? '' : ' yellow';
  const grey = selected || !['140', '30'].includes(pos);
  const flag = state => state ? ' miss' : y;
  return `<tr class="row${grey ? ' grey' : ''}${current ? ' current' : ''}">`
    + td('ind', current ? '▷' : selected ? '♦' : '')
    + td('indent') + td('exp', '<button aria-label="Aufklappen"></button>') + td('gap')
    + td('num' + (selected || pos === '20' || pos === '140' ? ' ok' : ''), pos)
    + td('box-cell' + (selected ? ' ok' : ''), box(selected ? 1 : 0, 'Position ' + pos))
    + td('small' + (cause.startsWith('BANF') ? ' bright' : y), cause)
    + td(order === '27.11.25' ? '' : 'late', order) + td('', due)
    + td('', current ? `<div class="cell">${link(art)}${more}</div>` : link(art))
    + td('', name) + td('small' + y, dim)
    + td('box-cell' + flag(charge), box(charge, 'Charge')) + td('box-cell' + flag(check), box(check, 'Prüfmerkmal'))
    + td('num', qty) + td(y, current ? `<div class="cell">${unit}${more}</div>` : unit)
    + td('num' + y, stock) + td('num' + y, avail) + td('num' + y, target) + td('small' + y, ac)
    + td('box-cell', box(cut, 'Zuschnitt'))
    + td(selected ? '' : 'lime', current ? `<div class="cell">${note}<button class="mini" aria-label="Zusatztext"><svg viewBox="0 0 10 10"><path d="M1 3l4 4 4-4"/></svg></button></div>` : note)
    + td('lief' + (supplier ? '' : ' miss'), current ? `<div class="cell">${link(supplier)}${more}</div>` : link(supplier))
    + td('num' + y, price) + td('num' + y, value) + td('small' + y, origin) + td('num', lot)
    + td('box-cell' + y, box(extra, 'Ab-/Zuschläge'))
    + td(selected ? 'small ok' : 'faint yellow', orderNo) + td('small num' + (selected ? ' ok' : y), orderPos)
    + td(request === 'ANFL25-00121' ? 'small ok' : 'faint' + y, request)
    + '</tr>';
}

const cols = '<colgroup>' + widths.map(w => `<col class="c${w}">`).join('') + '<col></colgroup>';
const table = document.getElementById('positions');
table.insertAdjacentHTML('afterbegin', cols);
document.getElementById('totals').insertAdjacentHTML('afterbegin', cols);

table.tHead.insertAdjacentHTML('beforeend', '<tr class="heads"><th class="ind"><svg class="lines"><use href="#lines"/></svg></th>'
  + heads.map(([title, span = 1, linked, sorted]) => `<th colspan="${span}"><div>${linked ? '<svg class="link"><use href="#link"/></svg>' : ''}${title}${sorted ? '<span class="sort">△</span>' : ''}</div></th>`).join('') + '</tr>');

table.tBodies[0].innerHTML = groups.map(g => `<tr class="group"><td class="ind"></td><td colspan="30">${g.title}</td></tr>` + g.rows.map(rowHtml).join('')).join('');

document.querySelectorAll('[data-mixed]').forEach(el => el.indeterminate = true);
```
